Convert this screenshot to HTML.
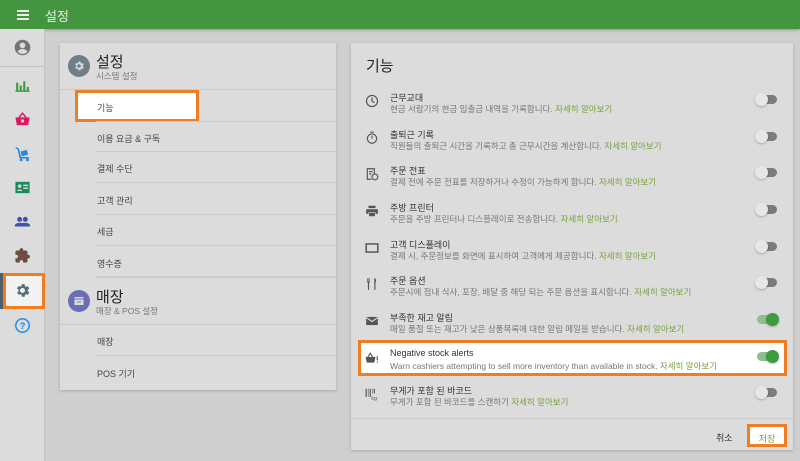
<!DOCTYPE html>
<html><head><meta charset="utf-8"><style>
*{box-sizing:border-box;margin:0;padding:0}
body{width:800px;height:461px;overflow:hidden;background:#cfcfcf;font-family:"Liberation Sans","Noto Sans CJK KR",sans-serif;position:relative;color:#333}
.top{position:absolute;left:0;top:0;width:800px;height:29px;background:#43963f;color:#e8f2e6;box-shadow:0 1px 3px rgba(0,0,0,.3)}
.top .t{position:absolute;left:45px;top:6px;font-size:13px}
.ham{position:absolute;left:17px;top:10px;width:12px;height:2px;background:#e8f2e6;box-shadow:0 4px 0 #e8f2e6,0 8px 0 #e8f2e6}
.side{position:absolute;left:0;top:29px;width:45px;height:432px;background:#dcdcdc;border-right:1px solid #c4c4c4}
.side .ic{position:absolute;left:14px;width:17px;height:17px}
.card{position:absolute;background:#dcdcdc;box-shadow:0 1px 3px rgba(0,0,0,.2)}
.lrow{position:absolute;left:36px;right:0;height:31px;border-bottom:1px solid #cbcbcb;font-size:9px;color:#444;padding:10px 0 0 1px}
.hd{position:absolute;left:0;right:0}
.hd .c{position:absolute;left:8px;width:22px;height:22px;border-radius:50%}
.hd .h1{position:absolute;left:36px;font-size:15px;color:#222}
.hd .h2{position:absolute;left:36px;font-size:8.5px;color:#777}
.row{position:absolute;left:8px;width:428px;height:36px}
.row .tt{position:absolute;left:31px;top:1px;font-size:9px;color:#333}
.row .dd{position:absolute;left:31px;top:13px;font-size:8.5px;color:#777;white-space:nowrap}
.row .dd b{font-weight:normal;color:#7aa03e}
.row svg{position:absolute;left:6px;top:4px}
.tg{position:absolute;left:398px;top:5px;width:20px;height:9px;border-radius:5px;background:#7b7b7b}
.tg::after{content:"";position:absolute;left:-2px;top:-2px;width:13px;height:13px;border-radius:50%;background:#e6e6e6;box-shadow:0 1px 2px rgba(0,0,0,.25)}
.tg.on{background:#8cc08d}
.tg.on::after{left:9px;background:#3f9a42}
</style></head><body>
<div class="top"><div class="ham"></div><div class="t">설정</div></div>
<div class="side">
<svg class="ic" style="top:10px" viewBox="0 0 24 24"><circle cx="12" cy="12" r="11" fill="#757575"/><circle cx="12" cy="9" r="4" fill="#dcdcdc"/><path d="M5 18c2-3 5-4 7-4s5 1 7 4c-2 2-4 3-7 3s-5-1-7-3z" fill="#dcdcdc"/></svg>
<div style="position:absolute;left:0;top:37px;width:44px;height:1px;background:#c4c4c4"></div>
<svg class="ic" style="top:48px" viewBox="0 0 24 24" fill="#3f9a42"><rect x="3" y="8" width="3" height="12"/><rect x="8" y="12" width="3" height="8"/><rect x="13" y="6" width="3" height="14"/><rect x="18" y="14" width="3" height="6"/><rect x="2" y="19" width="20" height="2"/></svg>
<svg class="ic" style="top:82px" viewBox="0 0 24 24" fill="#d81b60"><path d="M2 9h20l-2 11H4z"/><path d="M7 9l5-6 5 6" stroke="#d81b60" stroke-width="2" fill="none"/><rect x="10" y="12" width="4" height="4" fill="#dcdcdc"/></svg>
<svg class="ic" style="top:116px" viewBox="0 0 24 24" fill="#1e88e5"><path d="M3 3l4 2 3 12h11v2H8L5 6 2 5z"/><rect x="10" y="8" width="9" height="7" transform="rotate(-15 14 11)"/><circle cx="10" cy="21" r="2"/><circle cx="19" cy="21" r="2"/></svg>
<svg class="ic" style="top:150px" viewBox="0 0 24 24"><rect x="2" y="4" width="20" height="16" fill="#1b8a5a"/><circle cx="8" cy="10" r="2.5" fill="#dcdcdc"/><path d="M4 17c1-3 7-3 8 0z" fill="#dcdcdc"/><rect x="13" y="8" width="7" height="2" fill="#dcdcdc"/><rect x="13" y="12" width="7" height="2" fill="#dcdcdc"/></svg>
<svg class="ic" style="top:184px" viewBox="0 0 24 24" fill="#3f51b5"><circle cx="8" cy="9" r="3.5"/><circle cx="16" cy="9" r="3.5"/><path d="M1 19c0-4 4-5 7-5s7 1 7 5zM13 19c0-3-1-4-2-5 1 0 3 0 5 0 3 0 7 1 7 5z"/></svg>
<svg class="ic" style="top:218px" viewBox="0 0 24 24" fill="#6d4c41"><path d="M20 11h-1V7c0-1-1-2-2-2h-4V4a2.5 2.5 0 0 0-5 0v1H4c-1 0-2 1-2 2v4h1a2.5 2.5 0 0 1 0 5H2v4c0 1 1 2 2 2h4v-1a2.5 2.5 0 0 1 5 0v1h4c1 0 2-1 2-2v-4h1a2.5 2.5 0 0 0 0-5z"/></svg>
<div style="position:absolute;left:3px;top:244px;width:42px;height:36px;background:#f2f2f2;border:3px solid #ef7d22"></div>
<div style="position:absolute;left:0;top:244px;width:3px;height:36px;background:#4f5f6b"></div>
<svg class="ic" style="top:253px" viewBox="0 0 24 24" fill="#546e7a"><path d="M19.4 13a7.5 7.5 0 0 0 0-2l2.1-1.6-2-3.5-2.5 1a7 7 0 0 0-1.7-1L14.9 3h-4l-.4 2.7a7 7 0 0 0-1.7 1l-2.5-1-2 3.5L6.6 11a7.5 7.5 0 0 0 0 2l-2.1 1.6 2 3.5 2.5-1a7 7 0 0 0 1.7 1l.4 2.7h4l.4-2.7a7 7 0 0 0 1.7-1l2.5 1 2-3.5zM12 15.5a3.5 3.5 0 1 1 0-7 3.5 3.5 0 0 1 0 7z"/></svg>
<svg class="ic" style="top:288px" viewBox="0 0 24 24"><circle cx="12" cy="12" r="9.5" fill="none" stroke="#1e88e5" stroke-width="2"/><text x="12" y="17" font-size="13" text-anchor="middle" fill="#1e88e5" font-family="Liberation Sans" font-weight="bold">?</text></svg>
</div>

<div class="card" style="left:60px;top:43px;width:276px;height:347px">
 <div class="hd" style="top:0;height:47px;border-bottom:1px solid #cbcbcb">
  <div class="c" style="top:12px;background:#707f87"></div>
  <svg style="position:absolute;left:13px;top:17px" width="12" height="12" viewBox="0 0 24 24" fill="#dcdcdc"><path d="M19.4 13a7.5 7.5 0 0 0 0-2l2.1-1.6-2-3.5-2.5 1a7 7 0 0 0-1.7-1L14.9 3h-4l-.4 2.7a7 7 0 0 0-1.7 1l-2.5-1-2 3.5L6.6 11a7.5 7.5 0 0 0 0 2l-2.1 1.6 2 3.5 2.5-1a7 7 0 0 0 1.7 1l.4 2.7h4l.4-2.7a7 7 0 0 0 1.7-1l2.5 1 2-3.5zM12 15.5a3.5 3.5 0 1 1 0-7 3.5 3.5 0 0 1 0 7z"/></svg>
  <div class="h1" style="top:8px">설정</div><div class="h2" style="top:27px">시스템 설정</div>
 </div>
 <div style="position:absolute;left:15px;top:47px;width:124px;height:32px;background:#fff;border:3px solid #ef7d22;font-size:9px;color:#444;padding:8px 0 0 19px">기능</div>
 <div class="lrow" style="top:78px;border-top:1px solid #cbcbcb">이용 요금 &amp; 구독</div>
 <div class="lrow" style="top:109px">결제 수단</div>
 <div class="lrow" style="top:141px">고객 관리</div>
 <div class="lrow" style="top:172px">세금</div>
 <div class="lrow" style="top:204px;border-bottom:2px solid #cbcbcb">영수증</div>
 <div class="hd" style="top:235px;height:47px;border-bottom:1px solid #cbcbcb">
  <div class="c" style="top:12px;background:#6a6fb3"></div>
  <svg style="position:absolute;left:13px;top:17px" width="12" height="12" viewBox="0 0 24 24" fill="#dcdcdc"><rect x="3" y="4" width="18" height="3"/><rect x="3" y="9" width="18" height="11"/><rect x="8" y="13" width="8" height="2" fill="#6a6fb3"/></svg>
  <div class="h1" style="top:8px">매장</div><div class="h2" style="top:27px">매장 &amp; POS 설정</div>
 </div>
 <div class="lrow" style="top:282px">매장</div>
 <div class="lrow" style="top:314px;border-bottom:none">POS 기기</div>
</div>

<div class="card" style="left:351px;top:43px;width:442px;height:407px">
 <div style="position:absolute;left:15px;top:12px;font-size:15px;color:#222">기능</div>
 <div class="row" style="top:47px"><svg width="14" height="14" viewBox="0 0 24 24" fill="none" stroke="#555" stroke-width="2"><circle cx="12" cy="12" r="9.5"/><path d="M12 6v6l4 3"/></svg><div class="tt">근무교대</div><div class="dd">현금 서랍기의 현금 입출금 내역을 기록합니다. <b>자세히 알아보기</b></div><div class="tg"></div></div>
 <div class="row" style="top:84px"><svg width="14" height="14" viewBox="0 0 24 24" fill="none" stroke="#555" stroke-width="2"><circle cx="12" cy="13" r="8"/><path d="M9 2h6M12 13V8"/></svg><div class="tt">출퇴근 기록</div><div class="dd">직원들의 출퇴근 시간을 기록하고 총 근무시간을 계산합니다. <b>자세히 알아보기</b></div><div class="tg"></div></div>
 <div class="row" style="top:120px"><svg width="14" height="14" viewBox="0 0 24 24" fill="#555"><path d="M3 2h14v9h-2V4H5v16h6v2H3z"/><rect x="7" y="7" width="6" height="2"/><rect x="7" y="11" width="4" height="2"/><circle cx="17" cy="17" r="5" fill="none" stroke="#555" stroke-width="2"/></svg><div class="tt">주문 전표</div><div class="dd">결제 전에 주문 전표를 저장하거나 수정이 가능하게 합니다. <b>자세히 알아보기</b></div><div class="tg"></div></div>
 <div class="row" style="top:157px"><svg width="14" height="14" viewBox="0 0 24 24" fill="#555"><rect x="6" y="3" width="12" height="4"/><path d="M2 9h20v8h-4v-3H6v3H2z"/><rect x="7" y="15" width="10" height="6"/></svg><div class="tt">주방 프린터</div><div class="dd">주문을 주방 프린터나 디스플레이로 전송합니다. <b>자세히 알아보기</b></div><div class="tg"></div></div>
 <div class="row" style="top:194px"><svg width="14" height="14" viewBox="0 0 24 24" fill="none" stroke="#555" stroke-width="2.5"><rect x="2" y="5" width="20" height="14"/></svg><div class="tt">고객 디스플레이</div><div class="dd">결제 시, 주문정보를 화면에 표시하여 고객에게 제공합니다. <b>자세히 알아보기</b></div><div class="tg"></div></div>
 <div class="row" style="top:230px"><svg width="14" height="14" viewBox="0 0 24 24" fill="#555"><path d="M5 2h1v6h1V2h1v8H7v12H5V10H4V2zM16 2c3 0 3 4 3 7h-1v13h-2z"/></svg><div class="tt">주문 옵션</div><div class="dd">주문시에 점내 식사, 포장, 배달 중 해당 되는 주문 옵션을 표시합니다. <b>자세히 알아보기</b></div><div class="tg"></div></div>
 <div class="row" style="top:267px"><svg width="14" height="14" viewBox="0 0 24 24" fill="#555"><path d="M2 5h20v14H2z"/><path d="M2 6l10 7 10-7" stroke="#dcdcdc" stroke-width="2" fill="none"/></svg><div class="tt">부족한 재고 알림</div><div class="dd">매일 품절 또는 재고가 낮은 상품목록에 대한 알림 메일을 받습니다. <b>자세히 알아보기</b></div><div class="tg on"></div></div>
 <div style="position:absolute;left:7px;top:297px;width:429px;height:36px;background:#fff;border:3px solid #ef7d22"></div>
 <div class="row" style="top:304px"><svg width="14" height="14" viewBox="0 0 24 24" fill="#555"><path d="M1 10h17l-2 10H3z"/><path d="M5 10l4-6 4 6" stroke="#555" stroke-width="2" fill="none"/><rect x="20" y="9" width="2" height="7"/><rect x="20" y="18" width="2" height="2"/></svg><div class="tt">Negative stock alerts</div><div class="dd">Warn cashiers attempting to sell more inventory than available in stock. <b>자세히 알아보기</b></div><div class="tg on"></div></div>
 <div class="row" style="top:340px"><svg width="14" height="14" viewBox="0 0 24 24" fill="#555"><rect x="1" y="3" width="2" height="14"/><rect x="5" y="3" width="1" height="14"/><rect x="8" y="3" width="2" height="14"/><rect x="12" y="3" width="1" height="8"/><rect x="15" y="3" width="2" height="8"/><text x="11" y="22" font-size="9" fill="#555" font-family="Liberation Sans">kg</text></svg><div class="tt">무게가 포함 된 바코드</div><div class="dd">무게가 포함 된 바코드를 스캔하기 <b>자세히 알아보기</b></div><div class="tg"></div></div>
 <div style="position:absolute;left:0;right:0;top:375px;height:1px;background:#cbcbcb"></div>
 <div style="position:absolute;left:365px;top:388px;font-size:9px;color:#333">취소</div>
 <div style="position:absolute;left:396px;top:381px;width:40px;height:23px;background:#fff;border:3px solid #ef7d22;font-size:9px;color:#7aa03e;text-align:center;padding-top:5px">저장</div>
</div>
</body></html>
